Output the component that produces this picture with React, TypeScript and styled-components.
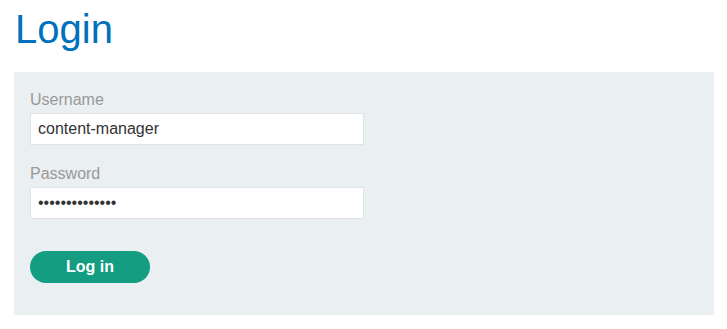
import React from "react";
import { styled, createGlobalStyle } from "styled-components";

const Global = createGlobalStyle`
  body {
    margin: 0;
    background: #fff;
    font-family: "Liberation Sans", Arial, sans-serif;
  }
`;

const App = () => {
  return (
    <>
      <Global />
      <Page>
        <Title>Login</Title>
        <Panel>
          <Label htmlFor="username">Username</Label>
          <Input id="username" type="text" defaultValue="content-manager" />
          <Label htmlFor="password" $spaced>
            Password
          </Label>
          <Input id="password" type="password" defaultValue="xxxxxxxxxxxxxx" />
          <Button type="button">Log in</Button>
        </Panel>
      </Page>
    </>
  );
};

export default App;

const Page = styled.div`
  padding: 6px 13px 0 14px;
`;

const Title = styled.h1`
  margin: 0 0 20px 1px;
  font-size: 40px;
  font-weight: 400;
  line-height: 46px;
  color: #0071bc;
`;

const Panel = styled.form`
  display: flex;
  flex-direction: column;
  align-items: flex-start;
  background: #eaeff2;
  padding: 19px 16px 32px;
`;

const Label = styled.label<{ $spaced?: boolean }>`
  display: block;
  margin-top: ${(p) => (p.$spaced ? "20px" : "0")};
  margin-bottom: 4px;
  font-size: 16px;
  line-height: 18px;
  color: #999;
`;

const Input = styled.input`
  box-sizing: border-box;
  width: 334px;
  height: 32px;
  padding: 0 7px;
  border: 1px solid #e0e3e5;
  background: #fff;
  font-family: "Liberation Sans", Arial, sans-serif;
  font-size: 16px;
  color: #333;
  outline: none;
`;

const Button = styled.button`
  margin-top: 32px;
  width: 120px;
  height: 32px;
  border: none;
  border-radius: 16px;
  background: #159d82;
  color: #fff;
  font-family: "Liberation Sans", Arial, sans-serif;
  font-size: 16px;
  font-weight: 700;
  cursor: pointer;
`;
